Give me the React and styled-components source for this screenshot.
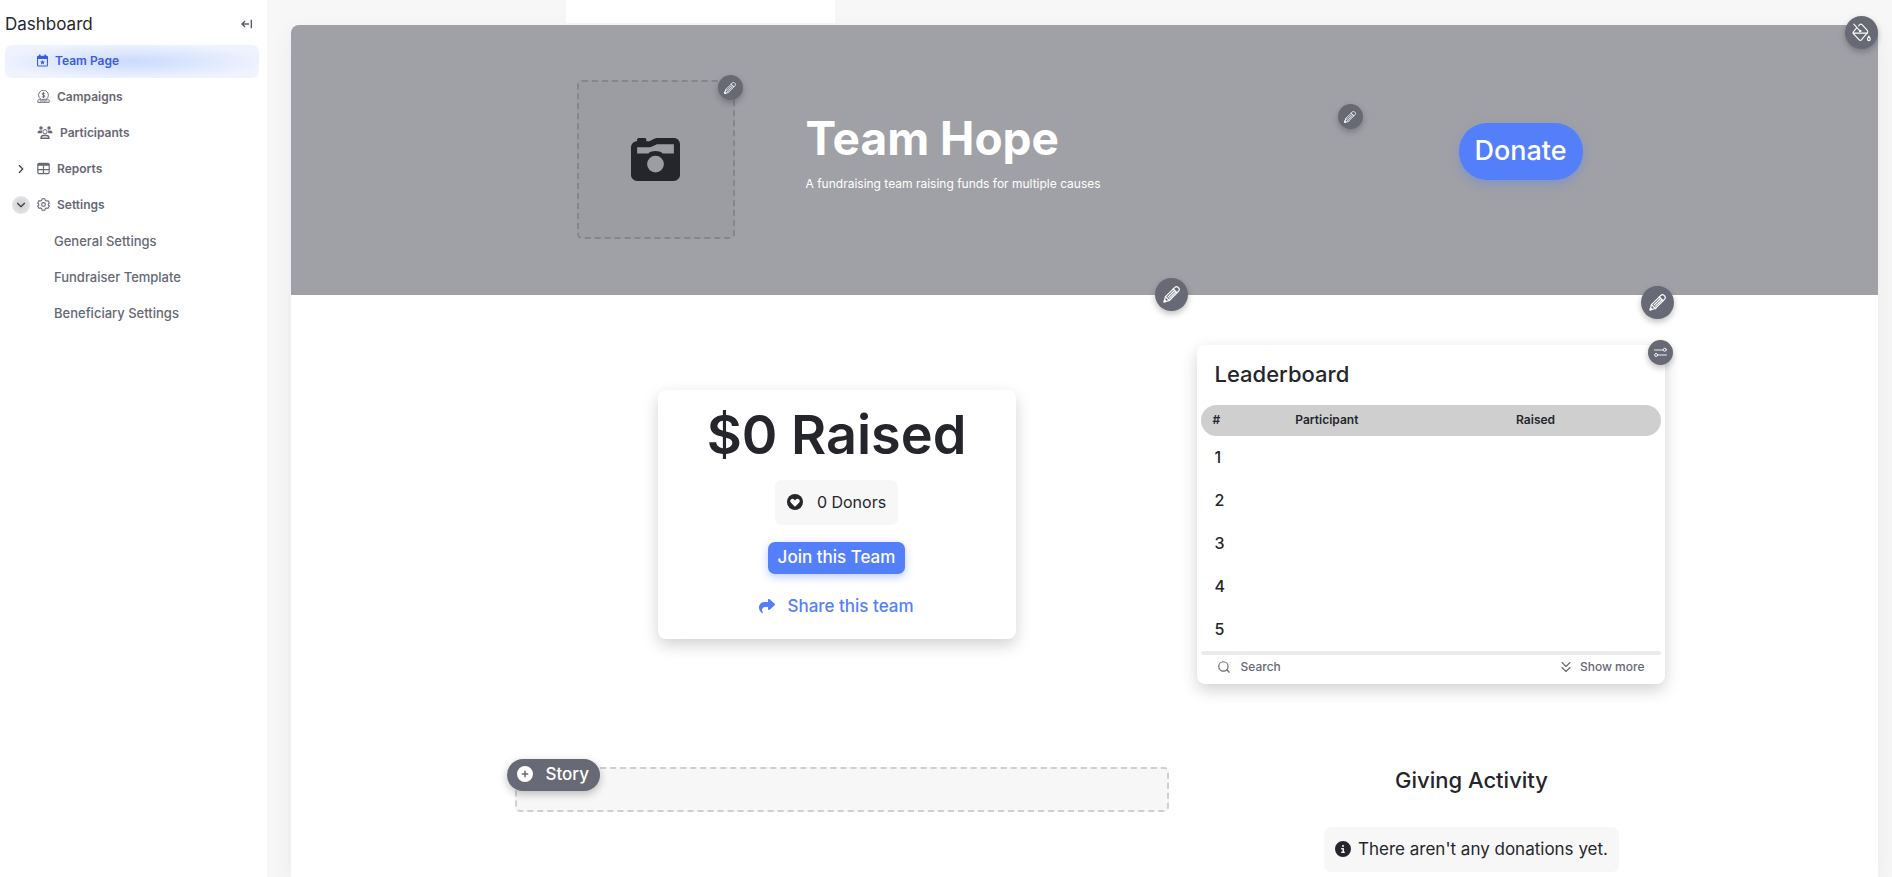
import { useState } from "react";
import styled, { createGlobalStyle, css } from "styled-components";
import {
  FaCameraRetro,
  FaShare,
  FaCircleInfo,
  FaCirclePlus,
} from "react-icons/fa6";
import {
  LuChevronDown,
  LuChevronRight,
  LuSearch,
} from "react-icons/lu";

const subItems = ["General Settings", "Fundraiser Template", "Beneficiary Settings"];
const ranks = [1, 2, 3, 4, 5];

function CollapseIcon() {
  return (
    <svg width="12" height="12" viewBox="0 0 12 12" fill="none" stroke="currentColor" strokeWidth="1.400">
      <path d="M8 6H1M4 3 1 6l3 3M10.300 1.800v8.400" />
    </svg>
  );
}

function CalendarIcon() {
  return (
    <svg width="11" height="13" viewBox="0 0 22 26" fill="currentColor">
      <path d="M4 1h3v2.500h8V1h3v2.500h1.500A2.500 2.500 0 0 1 22 6v16.500a2.500 2.500 0 0 1-2.500 2.500h-17A2.500 2.500 0 0 1 0 22.500V6a2.500 2.500 0 0 1 2.500-2.500H4zM2.200 10v12.800h17.600V10z" fillRule="evenodd" />
      <path d="m11 11.800 1.500 3 3.300.4-2.400 2.300.6 3.300-3-1.600-3 1.600.6-3.300-2.400-2.300 3.300-.4z" />
    </svg>
  );
}

function CampaignIcon() {
  return (
    <svg width="13" height="13" viewBox="0 0 24 24" fill="none" stroke="currentColor" strokeWidth="1.7">
      <path d="M6.5 16.5a9 9 0 1 1 11 0" />
      <path d="M14.5 6.8c-.4-1-1.300-1.400-2.500-1.400-1.500 0-2.500.7-2.500 1.900 0 2.800 5.200 1.200 5.200 4 0 1.200-1.100 2-2.700 2-1.400 0-2.400-.6-2.700-1.700M12 3.800v11" />
      <path d="M1.500 22.800v-2.300c0-2 1.300-3.300 3.200-3.300h14.600c1.900 0 3.200 1.300 3.200 3.300v2.300zM5 20.200h14" />
    </svg>
  );
}

function ParticipantsIcon() {
  return (
    <svg width="16" height="13" viewBox="0 0 30 26" fill="currentColor">
      <circle cx="7" cy="4" r="3.500" />
      <circle cx="23" cy="4" r="3.500" />
      <path d="M0 14.500c0-3.500 1.500-5.500 4-5.500h5l-.5 5.500zM30 14.500c0-3.500-1.500-5.500-4-5.500h-5l.5 5.500z" />
      <circle cx="15" cy="11.500" r="4.300" fill="none" stroke="currentColor" strokeWidth="2" />
      <path d="M7 24.500c0-3.500 2-5.500 5-5.500h6c3 0 5 2 5 5.500z" fill="none" stroke="currentColor" strokeWidth="2.600" />
    </svg>
  );
}

function ReportsIcon() {
  return (
    <svg width="13" height="13" viewBox="0 0 24 24" fill="none" stroke="currentColor" strokeWidth="2.200">
      <rect x="1.500" y="2.500" width="21" height="19" rx="2.500" />
      <path d="M1.500 5h21" strokeWidth="4" />
      <path d="M1.500 14h21M12 6v15" />
    </svg>
  );
}

function SettingsIcon() {
  return (
    <svg width="13" height="13" viewBox="0 0 24 24" fill="none" stroke="currentColor" strokeWidth="2" strokeLinejoin="round">
      <path d="M9.600 1.500h4.800l1 3 1.900 1.100 3.100-.7 2.400 4.200-2.100 2.300v1.200l2.100 2.300-2.400 4.200-3.100-.7-1.900 1.100-1 3H9.600l-1-3-1.900-1.100-3.100.7-2.400-4.200 2.100-2.300v-1.200L1.200 9.100l2.400-4.200 3.100.7 1.900-1.100z" />
      <circle cx="12" cy="12" r="3.500" />
    </svg>
  );
}

function PencilIcon({ size }) {
  return (
    <svg width={size} height={size} viewBox="0 0 24 24" fill="none" stroke="currentColor" strokeWidth="1.700" strokeLinejoin="round" strokeLinecap="round">
      <path d="M1.500 22.500 3.500 15 16.800 1.900c1.200-1.200 3.200-1.200 4.400 0l.9.9c1.200 1.200 1.200 3.200 0 4.400L9 20.500z" />
      <path d="m3.500 15 5.500 5.500M14.500 4.200l5.300 5.300M7.300 15.300l8.200-8.200M9.200 17.200l8.200-8.200M1.500 22.500l2.800-.8-2-2z" />
    </svg>
  );
}

function PaintIcon() {
  return (
    <svg width="19" height="19" viewBox="0 0 24 24" fill="none" stroke="currentColor" strokeWidth="1.400" strokeLinejoin="round" strokeLinecap="round">
      <path d="m8.300 3.600 1.600-1.500c.8-.8 2-.8 2.800 0l6.300 6.900c.9 1 1.200 2.400.3 3.500l-7.400 8.800c-.8.900-2 .9-2.800 0l-7.100-7.500c-.8-.9-.8-2.100 0-3l4-4.800M1.300 12.800h18.300M2.300 1.500l7.300 8" />
      <circle cx="10.400" cy="10" r=".9" />
      <path d="M21.300 16.500c1.100 1.900 1.700 3 1.700 4a1.700 1.700 0 0 1-3.400 0c0-1 .6-2.100 1.700-4z" />
    </svg>
  );
}

function SlidersIcon() {
  return (
    <svg width="13" height="11" viewBox="0 0 26 22" fill="none" stroke="currentColor" strokeWidth="1.800" strokeLinecap="round">
      <path d="M1 6h17M8 16h17" />
      <circle cx="21.500" cy="5.500" r="3" />
      <circle cx="4.200" cy="16" r="3" />
    </svg>
  );
}

function HeartCircleIcon() {
  return (
    <svg width="16" height="16" viewBox="0 0 16 16">
      <circle cx="8" cy="8" r="8" fill="#25262c" />
      <path fill="#fff" d="M8 12.800 4 8.700c-1-1-1-2.500-.1-3.300 1-.9 2.400-.7 3.200.1l.9.900.9-.9c.8-.8 2.200-1 3.200-.1.900.8.9 2.300-.1 3.300z" />
    </svg>
  );
}

function DoubleChevronIcon() {
  return (
    <svg width="10" height="12" viewBox="0 0 20 24" fill="none" stroke="currentColor" strokeWidth="2.200" strokeLinecap="round" strokeLinejoin="round">
      <path d="m2 3 8 8 8-8M2 13l8 8 8-8" />
    </svg>
  );
}

function Sidebar() {
  const [open, setOpen] = useState(true);

  return (
    <SidebarWrapper>
      <SidebarHeader>
        <SidebarTitle>Dashboard</SidebarTitle>
        <IconButton aria-label="Collapse sidebar">
          <CollapseIcon />
        </IconButton>
      </SidebarHeader>
      <NavList>
        <NavItem $active>
          <NavLink href="#team">
            <CalendarIcon />
            Team Page
          </NavLink>
        </NavItem>
        <NavItem>
          <NavLink href="#campaigns">
            <CampaignIcon />
            Campaigns
          </NavLink>
        </NavItem>
        <NavItem>
          <NavLink href="#participants">
            <ParticipantsIcon />
            Participants
          </NavLink>
        </NavItem>
        <NavItem>
          <Toggle aria-label="Expand reports">
            <LuChevronRight size={14} />
          </Toggle>
          <NavLink href="#reports">
            <ReportsIcon />
            Reports
          </NavLink>
        </NavItem>
        <NavItem>
          <Toggle $open={open} aria-label="Toggle settings" onClick={() => setOpen(!open)}>
            {open ? <LuChevronDown size={14} /> : <LuChevronRight size={14} />}
          </Toggle>
          <NavLink href="#settings">
            <SettingsIcon />
            Settings
          </NavLink>
        </NavItem>
        {open &&
          subItems.map((item) => (
            <NavItem key={item} $sub>
              <NavLink href="#settings">{item}</NavLink>
            </NavItem>
          ))}
      </NavList>
    </SidebarWrapper>
  );
}

function Hero() {
  return (
    <HeroWrapper>
      <PaintButton aria-label="Edit colors">
        <PaintIcon />
      </PaintButton>
      <HeroContent>
        <LogoBox>
          <FaCameraRetro size={49} />
          <LogoEdit $small aria-label="Edit logo">
            <PencilIcon size={12} />
          </LogoEdit>
        </LogoBox>
        <HeroText>
          <TeamName>Team Hope</TeamName>
          <Tagline>A fundraising team raising funds for multiple causes</Tagline>
          <TextEdit $small aria-label="Edit team name">
            <PencilIcon size={12} />
          </TextEdit>
        </HeroText>
        <DonateButton>Donate</DonateButton>
      </HeroContent>
    </HeroWrapper>
  );
}

function RaisedCard() {
  return (
    <RaisedWrapper>
      <RaisedTotal>$0 Raised</RaisedTotal>
      <Donors>
        <HeartCircleIcon />
        0 Donors
      </Donors>
      <JoinButton>Join this Team</JoinButton>
      <ShareButton>
        <FaShare size={16} />
        Share this team
      </ShareButton>
    </RaisedWrapper>
  );
}

function Leaderboard() {
  const [search, setSearch] = useState("");

  return (
    <BoardWrapper>
      <BoardOptions $small aria-label="Leaderboard options">
        <SlidersIcon />
      </BoardOptions>
      <BoardTitle>Leaderboard</BoardTitle>
      <BoardTable>
        <thead>
          <tr>
            <BoardHead $width="18%">#</BoardHead>
            <BoardHead $width="48%">Participant</BoardHead>
            <BoardHead>Raised</BoardHead>
          </tr>
        </thead>
        <tbody>
          {ranks.map((rank) => (
            <tr key={rank}>
              <BoardCell>{rank}</BoardCell>
              <BoardCell />
              <BoardCell />
            </tr>
          ))}
        </tbody>
      </BoardTable>
      <BoardDivider />
      <BoardFooter>
        <SearchLabel>
          <LuSearch size={14} strokeWidth={2} />
          <SearchInput
            type="text"
            aria-label="Search"
            placeholder="Search"
            value={search}
            onChange={(e) => setSearch(e.target.value)}
          />
        </SearchLabel>
        <ShowMore>
          <DoubleChevronIcon />
          Show more
        </ShowMore>
      </BoardFooter>
    </BoardWrapper>
  );
}

function App() {
  return (
    <>
      <GlobalStyle />
      <Layout>
        <Sidebar />
        <Main>
          <TopStrip>
            <TopTab />
          </TopStrip>
          <Page>
            <Hero />
            <Section>
              <SummaryColumn>
                <SummaryEdit aria-label="Edit summary">
                  <PencilIcon size={17} />
                </SummaryEdit>
                <RaisedCard />
              </SummaryColumn>
              <BoardColumn>
                <BoardEdit aria-label="Edit leaderboard">
                  <PencilIcon size={17} />
                </BoardEdit>
                <Leaderboard />
              </BoardColumn>
            </Section>
            <Section>
              <StoryBox>
                <StoryButton>
                  <FaCirclePlus size={16} />
                  Story
                </StoryButton>
              </StoryBox>
              <Activity>
                <ActivityTitle>Giving Activity</ActivityTitle>
                <Notice>
                  <FaCircleInfo size={16} />
                  There aren't any donations yet.
                </Notice>
              </Activity>
            </Section>
          </Page>
        </Main>
      </Layout>
    </>
  );
}
export default App;

const GlobalStyle = createGlobalStyle`
  * {
    box-sizing: border-box;
  }

  body {
    margin: 0;
    background: #f7f7f7;
    color: #25262c;
    font-family: "Inter", "Liberation Sans", sans-serif;
  }

  h1, h2, p, ul {
    margin: 0;
    padding: 0;
  }

  button, input {
    font-family: inherit;
    border: none;
    background: none;
    padding: 0;
  }

  button {
    cursor: pointer;
  }

  svg {
    flex-shrink: 0;
  }
`;

const Layout = styled.div`
  display: flex;
  min-height: 100vh;
`;

const SidebarWrapper = styled.aside`
  width: 267px;
  flex-shrink: 0;
  padding: 0 8px 0 5px;
  background: #fff;
`;

const SidebarHeader = styled.div`
  display: flex;
  align-items: center;
  justify-content: space-between;
  height: 45px;
  padding: 2px 6px 0 0;
`;

const SidebarTitle = styled.p`
  font-size: 17px;
  line-height: 20px;
`;

const IconButton = styled.button`
  display: flex;
  color: #5b5d69;
`;

const NavList = styled.ul`
  display: flex;
  flex-direction: column;
  gap: 3px;
  list-style: none;
`;

const NavLink = styled.a`
  display: flex;
  align-items: center;
  gap: 7px;
  color: inherit;
  text-decoration: none;
`;

const NavItem = styled.li`
  position: relative;
  display: flex;
  align-items: center;
  height: 33px;
  padding: 0 0 2px ${({ $sub }) => ($sub ? 49 : 32)}px;
  border-radius: 7px;
  font-size: ${({ $sub }) => ($sub ? 13 : 12)}px;
  font-weight: ${({ $sub }) => ($sub ? 500 : 600)};
  color: #666874;

  ${({ $active }) =>
    $active &&
    css`
      color: #3b5be0;
      background: radial-gradient(ellipse at center, #cbdafd 0%, #eef3fe 75%);
    `}
`;

const Toggle = styled.button`
  position: absolute;
  left: 7px;
  display: flex;
  align-items: center;
  justify-content: center;
  width: 18px;
  height: 18px;
  border-radius: 50%;
  color: #3c3d45;
  background: ${({ $open }) =>
    $open ? "radial-gradient(circle, #cfcfd2 0%, #e9e9eb 90%)" : "none"};
`;

const Main = styled.main`
  display: flex;
  flex: 1;
  flex-direction: column;
  min-width: 0;
  padding: 0 14px 0 24px;
`;

const TopStrip = styled.div`
  height: 25px;
  padding-left: 275px;
`;

const TopTab = styled.div`
  width: 269px;
  height: 23px;
  background: #fff;
`;

const Page = styled.div`
  flex: 1;
  background: #fff;
  border-radius: 8px 8px 0 0;
  box-shadow: 0 8px 24px rgba(0, 0, 0, 0.06);
`;

const Fab = styled.button`
  position: absolute;
  z-index: 1;
  display: flex;
  align-items: center;
  justify-content: center;
  width: ${({ $small }) => ($small ? 25 : 33)}px;
  height: ${({ $small }) => ($small ? 25 : 33)}px;
  border-radius: 50%;
  color: #fff;
  background: #676974;
  box-shadow: 0 3px 6px rgba(0, 0, 0, 0.25);
`;

const HeroWrapper = styled.header`
  position: relative;
  height: 270px;
  border-radius: 8px 8px 0 0;
  background: #a0a1a6;
  color: #fff;
`;

const PaintButton = styled(Fab)`
  top: -9px;
  right: 0;
`;

const HeroContent = styled.div`
  display: flex;
  max-width: 1180px;
  margin: 0 auto;
  padding: 55px 92px 0 82px;
`;

const LogoBox = styled.div`
  position: relative;
  display: flex;
  align-items: center;
  justify-content: center;
  width: 158px;
  height: 159px;
  flex-shrink: 0;
  border: 2px dashed #85868b;
  border-radius: 5px;
  background: #9c9da2;
  color: #25262c;
`;

const LogoEdit = styled(Fab)`
  top: -7px;
  right: -10px;
`;

const HeroText = styled.div`
  position: relative;
  flex: 1;
  margin: 24px 96px 0 71px;
`;

const TeamName = styled.h1`
  font-size: 46px;
  line-height: 68px;
  font-weight: 700;
`;

const Tagline = styled.p`
  font-size: 12px;
  line-height: 24px;
`;

const TextEdit = styled(Fab)`
  top: 0;
  right: 0;
`;

const DonateButton = styled.button`
  width: 124px;
  height: 57px;
  margin-top: 43px;
  padding-bottom: 2px;
  border-radius: 28px;
  background: #547ffa;
  color: #fff;
  font-size: 27px;
  font-weight: 500;
  box-shadow: 0 4px 10px rgba(84, 127, 250, 0.4);
`;

const Section = styled.section`
  display: grid;
  grid-template-columns: 694fr 486fr;
  max-width: 1180px;
  margin: 0 auto;
`;

const SummaryColumn = styled.div`
  position: relative;
  padding: 95px 10px 0 0;
`;

const BoardColumn = styled.div`
  position: relative;
  padding: 50px 10px 75px 8px;
`;

const SummaryEdit = styled(Fab)`
  top: -17px;
  right: 1px;
`;

const BoardEdit = styled(Fab)`
  top: -9px;
  right: 1px;
`;

const Card = styled.div`
  border-radius: 8px;
  background: #fff;
  box-shadow: 0 6px 16px rgba(0, 0, 0, 0.18);
`;

const RaisedWrapper = styled(Card)`
  display: flex;
  flex-direction: column;
  align-items: center;
  width: 358px;
  margin: 0 auto;
  padding: 12px 16px 20px;
`;

const RaisedTotal = styled.h2`
  font-size: 54px;
  line-height: 66px;
  font-weight: 600;
`;

const InfoBox = styled.p`
  display: flex;
  align-items: center;
  height: 45px;
  padding: 0 12px 2px;
  border-radius: 7px;
  background: #f7f7f7;
`;

const Donors = styled(InfoBox)`
  gap: 14px;
  margin-top: 12px;
  font-size: 16px;
`;

const JoinButton = styled.button`
  height: 32px;
  margin-top: 17px;
  padding: 0 10px 2px;
  border-radius: 7px;
  background: #547ffa;
  color: #fff;
  font-size: 17px;
  font-weight: 500;
  box-shadow: 0 3px 8px rgba(84, 127, 250, 0.4);
`;

const ShareButton = styled.button`
  display: flex;
  align-items: center;
  gap: 12px;
  height: 24px;
  margin: 20px 0 1px;
  color: #547ffa;
  font-size: 17px;
  font-weight: 500;
`;

const BoardWrapper = styled(Card)`
  position: relative;
  padding: 0 4px;
`;

const BoardOptions = styled(Fab)`
  top: -5px;
  right: -8px;
`;

const BoardTitle = styled.h2`
  padding: 0 14px 2px;
  font-size: 22px;
  line-height: 58px;
  font-weight: 500;
`;

const BoardTable = styled.table`
  width: 100%;
  table-layout: fixed;
  border-collapse: collapse;
`;

const BoardHead = styled.th`
  width: ${({ $width }) => $width || "auto"};
  height: 31px;
  padding: 0 12px 2px;
  background: #cfcfcf;
  font-size: 12px;
  font-weight: 600;
  text-align: left;

  &:first-child {
    border-radius: 16px 0 0 16px;
  }

  &:last-child {
    border-radius: 0 16px 16px 0;
  }
`;

const BoardCell = styled.td`
  height: 43px;
  padding: 0 14px 2px;
  font-size: 16px;
  font-weight: 500;
`;

const BoardDivider = styled.div`
  height: 4px;
  border-radius: 2px;
  background: #ebebeb;
`;

const BoardFooter = styled.div`
  display: flex;
  align-items: center;
  justify-content: space-between;
  height: 29px;
  padding: 0 16px 6px;
  color: #666874;
`;

const SearchLabel = styled.label`
  display: flex;
  align-items: center;
  gap: 10px;
`;

const SearchInput = styled.input`
  width: 160px;
  color: #666874;
  font-size: 12px;
  font-weight: 500;
  outline: none;

  &::placeholder {
    color: #666874;
  }
`;

const ShowMore = styled.button`
  display: flex;
  align-items: center;
  gap: 9px;
  color: #666874;
  font-size: 12px;
  font-weight: 500;
`;

const StoryBox = styled.div`
  position: relative;
  height: 45px;
  margin: 8px 20px 0;
  border: 2px dashed #cfcfcf;
  border-radius: 5px;
  background: #f7f7f7;
`;

const StoryButton = styled.button`
  position: absolute;
  top: -10px;
  left: -10px;
  display: flex;
  align-items: center;
  gap: 13px;
  height: 32px;
  padding: 0 11px 2px 10px;
  border-radius: 16px;
  background: #676974;
  color: #fff;
  font-size: 17px;
  font-weight: 500;
  box-shadow: 0 3px 8px rgba(0, 0, 0, 0.25);
`;

const Activity = styled.div`
  display: flex;
  flex-direction: column;
  align-items: center;
  padding: 5px 0 5px 80px;
`;

const ActivityTitle = styled.h2`
  font-size: 22px;
  line-height: 32px;
  font-weight: 500;
`;

const Notice = styled(InfoBox)`
  gap: 7px;
  margin-top: 31px;
  padding: 0 11px 2px;
  font-size: 17px;
`;
